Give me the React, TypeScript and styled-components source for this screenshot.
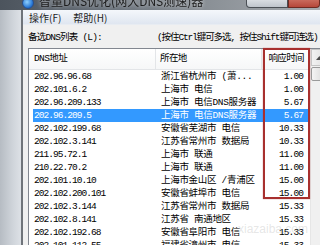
import React from "react";
import styled, { createGlobalStyle } from "styled-components";

const Global = createGlobalStyle`
  html, body { margin: 0; padding: 0; width: 320px; height: 245px; overflow: hidden; background: #c9ced4; }
  #root { width: 320px; height: 245px; }
`;

const Screen = styled.div`
  position: relative;
  width: 320px;
  height: 245px;
  overflow: hidden;
  display: flex;
  flex-direction: column;
  font-family: "Liberation Mono", "Noto Sans CJK SC", monospace;
  color: #000;
`;

const TitleBar = styled.div`
  height: 10px;
  flex: none;
  display: flex;
  align-items: flex-start;
  overflow: hidden;
  padding-left: 22px;
  background: linear-gradient(90deg, #4c545d 0%, #69717a 35%, #8a9096 65%, #a7abb0 100%);
`;

const AppIcon = styled.div`
  width: 10px;
  height: 10px;
  margin-top: -3px;
  border-radius: 50%;
  flex: none;
  background: radial-gradient(circle at 40% 40%, #8fd0ff, #1f6fd0 70%);
  border: 1px solid #2a4f8a;
`;

const TitleText = styled.div`
  margin-left: 5px;
  margin-top: -6px;
  font-family: "Noto Sans CJK SC", sans-serif;
  font-size: 12px;
  line-height: 14px;
  color: #1c1c1c;
  text-shadow: 0 0 4px rgba(255, 255, 255, 0.7);
  filter: blur(0.4px);
  white-space: nowrap;
`;

const CaptionButtons = styled.div`
  margin-left: auto;
  display: flex;
  height: 9px;
`;

const CaptionButton = styled.div<{ $close?: boolean; $w: number }>`
  width: ${(p) => p.$w}px;
  height: 8px;
  box-sizing: border-box;
  border: 1px solid ${(p) => (p.$close ? "#6e2a22" : "#4a4f55")};
  border-top: none;
  background: ${(p) =>
    p.$close ? "linear-gradient(#c96a5c, #b6473a)" : "linear-gradient(#d9dde2, #bfc5cc)"};
  border-radius: ${(p) => (p.$close ? "0 0 4px 0" : "0 0 0 4px")};
`;

const Body = styled.div`
  flex: 1;
  display: flex;
  min-height: 0;
  overflow: hidden;
`;

const LeftFrame = styled.div`
  width: 21px;
  flex: none;
  background: linear-gradient(90deg, #b6bcc3 0%, #cfd4da 60%, #dde1e6 100%);
`;

const Client = styled.div`
  flex: 1;
  min-width: 0;
  display: flex;
  flex-direction: column;
  border-left: 2px solid #6f747a;
  background: #f0f0f0;
`;

const MenuBar = styled.div`
  height: 15px;
  flex: none;
  box-sizing: border-box;
  display: flex;
  align-items: center;
  gap: 12px;
  padding-left: 6px;
  background: linear-gradient(#f4f7fb, #dfe6f0);
  border-bottom: 1px solid #e8ecf2;
  font-family: "Noto Sans CJK SC", sans-serif;
  font-size: 10px;
  color: #1e1e1e;
`;

const LabelRow = styled.div`
  height: 23px;
  flex: none;
  box-sizing: border-box;
  display: grid;
  grid-template-columns: 129px auto;
  padding: 7px 0 0 5px;
  font-size: 9.5px;
  line-height: 12px;
  white-space: nowrap;
`;

const Label = styled.span`
  letter-spacing: -0.8px;
`;

const Hint = styled.span`
  letter-spacing: -1.1px;
`;

const ListBox = styled.div`
  flex: none;
  width: 300px;
  height: 210px;
  margin-left: 5px;
  box-sizing: border-box;
  border: 1px solid #828790;
  background: #fff;
  display: grid;
  grid-template-columns: 1fr 17px;
`;

const ListMain = styled.div`
  display: flex;
  flex-direction: column;
  min-width: 0;
`;

const Header = styled.div`
  height: 21px;
  flex: none;
  box-sizing: border-box;
  display: grid;
  grid-template-columns: 4px 123px 106px 44px;
  background: linear-gradient(#ffffff, #f6f7f8);
  border-bottom: 1px solid #e3e5e8;
  font-size: 9.5px;
  line-height: 20px;
`;

const HeaderCell = styled.div<{ $pad?: number; $right?: boolean; $sep?: boolean }>`
  padding-left: ${(p) => p.$pad ?? 0}px;
  padding-right: ${(p) => (p.$right ? 2 : 0)}px;
  text-align: ${(p) => (p.$right ? "right" : "left")};
  border-right: ${(p) => (p.$sep ? "1px solid #e3e5e8" : "none")};
  letter-spacing: -0.6px;
  white-space: nowrap;
  overflow: hidden;
`;

const Row = styled.div<{ $selected?: boolean }>`
  height: 13px;
  flex: none;
  margin-left: 4px;
  display: grid;
  grid-template-columns: 123px 106px 44px;
  font-size: 9.5px;
  line-height: 13px;
  background: ${(p) => (p.$selected ? "#3399ff" : "transparent")};
  color: ${(p) => (p.$selected ? "#fff" : "#000")};
  white-space: nowrap;
`;

const IpCell = styled.div`
  padding-left: 1px;
  letter-spacing: -0.95px;
`;

const LocCell = styled.div`
  padding-left: 5px;
  letter-spacing: -0.3px;
  overflow: hidden;
`;

const TimeCell = styled.div`
  text-align: right;
  padding-right: 3px;
  letter-spacing: -0.9px;
`;

const ScrollBar = styled.div`
  display: flex;
  flex-direction: column;
  background: #f0f0f0;
  border-left: 1px solid #e6e6e6;
`;

const ScrollArrow = styled.div`
  height: 17px;
  box-sizing: border-box;
  border: 1px solid #c5c5c5;
  background: linear-gradient(90deg, #f2f2f2, #dedede);
  display: flex;
  align-items: center;
  justify-content: center;
`;

const ScrollThumb = styled.div`
  height: 14px;
  margin-top: 1px;
  box-sizing: border-box;
  border: 1px solid #9a9a9a;
  border-radius: 2px;
  background: linear-gradient(90deg, #f4f4f4, #d6d6d6);
`;

const RedBox = styled.div`
  position: absolute;
  left: 263px;
  top: 48px;
  width: 47px;
  height: 151px;
  box-sizing: border-box;
  border: 2px solid #a8302e;
  box-shadow: 0 0 1px rgba(168, 48, 46, 0.7);
  pointer-events: none;
`;

const Watermark = styled.div`
  position: absolute;
  left: 238px;
  top: 222px;
  pointer-events: none;
  font-family: "Liberation Sans", sans-serif;
  font-size: 12px;
  color: rgba(170, 170, 170, 0.3);
  white-space: nowrap;
`;

type Entry = { ip: string; loc: string; time: string; selected?: boolean };

const rows: Entry[] = [
  { ip: "202.96.96.68", loc: "浙江省杭州市 (萧...", time: "1.00" },
  { ip: "202.101.6.2", loc: "上海市 电信", time: "1.00" },
  { ip: "202.96.209.133", loc: "上海市 电信DNS服务器", time: "5.67" },
  { ip: "202.96.209.5", loc: "上海市 电信DNS服务器", time: "5.67", selected: true },
  { ip: "202.102.199.68", loc: "安徽省芜湖市 电信", time: "10.33" },
  { ip: "202.102.3.141", loc: "江苏省常州市 数据局", time: "10.33" },
  { ip: "211.95.72.1", loc: "上海市 联通", time: "11.00" },
  { ip: "210.22.70.2", loc: "上海市 联通", time: "11.00" },
  { ip: "202.101.10.10", loc: "上海市金山区 /青浦区", time: "15.00" },
  { ip: "202.102.200.101", loc: "安徽省蚌埠市 电信", time: "15.00" },
  { ip: "202.102.3.144", loc: "江苏省常州市 数据局", time: "15.33" },
  { ip: "202.102.8.141", loc: "江苏省 南通地区", time: "15.33" },
  { ip: "202.102.192.68", loc: "安徽省阜阳市 电信", time: "15.33" },
  { ip: "202.101.112.55", loc: "福建省漳州市 电信", time: "15.33" },
];

export default function App() {
  return (
    <>
      <Global />
      <Screen>
        <TitleBar>
          <AppIcon />
          <TitleText>智量DNS优化(网大DNS测速)器</TitleText>
          <CaptionButtons>
            <CaptionButton $w={42} />
            <CaptionButton $w={32} $close />
          </CaptionButtons>
        </TitleBar>
        <Body>
          <LeftFrame />
          <Client>
            <MenuBar>
              <span>操作(F)</span>
              <span>帮助(H)</span>
            </MenuBar>
            <LabelRow>
              <Label>备选DNS列表 (L):</Label>
              <Hint>(按住Ctrl键可多选, 按住Shift键可连选)</Hint>
            </LabelRow>
            <ListBox>
              <ListMain>
                <Header>
                  <HeaderCell />
                  <HeaderCell $pad={1} $sep>DNS地址</HeaderCell>
                  <HeaderCell $pad={4} $sep>所在地</HeaderCell>
                  <HeaderCell $right>响应时间</HeaderCell>
                </Header>
                {rows.map((r) => (
                  <Row key={r.ip} $selected={r.selected}>
                    <IpCell>{r.ip}</IpCell>
                    <LocCell>{r.loc}</LocCell>
                    <TimeCell>{r.time}</TimeCell>
                  </Row>
                ))}
              </ListMain>
              <ScrollBar>
                <ScrollArrow>
                  <svg width="7" height="4" viewBox="0 0 7 4">
                    <path d="M0 4 L3.5 0 L7 4 Z" fill="#4d4d4d" />
                  </svg>
                </ScrollArrow>
                <ScrollThumb />
              </ScrollBar>
            </ListBox>
          </Client>
        </Body>
        <RedBox />
        <Watermark>xiazaiba.com</Watermark>
      </Screen>
    </>
  );
}
